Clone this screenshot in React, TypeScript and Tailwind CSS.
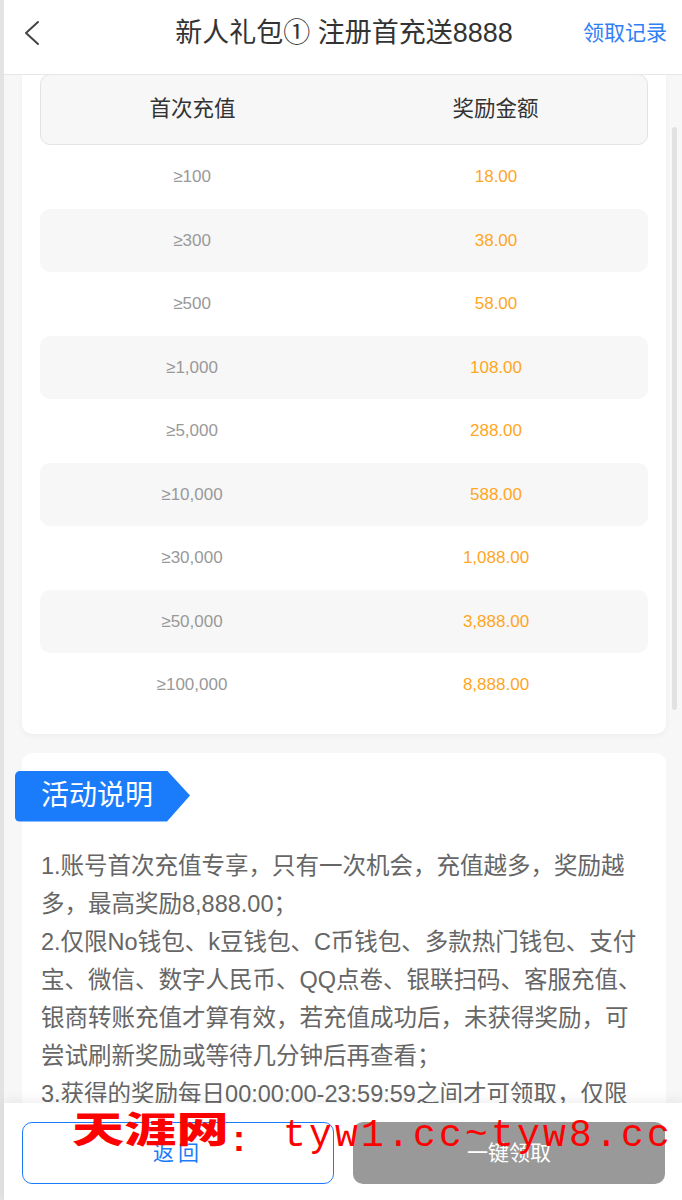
import React from "react";

const rows = [
  ["≥100", "18.00"],
  ["≥300", "38.00"],
  ["≥500", "58.00"],
  ["≥1,000", "108.00"],
  ["≥5,000", "288.00"],
  ["≥10,000", "588.00"],
  ["≥30,000", "1,088.00"],
  ["≥50,000", "3,888.00"],
  ["≥100,000", "8,888.00"],
];

const lines = [
  "1.账号首次充值专享，只有一次机会，充值越多，奖励越",
  "多，最高奖励8,888.00；",
  "2.仅限No钱包、k豆钱包、C币钱包、多款热门钱包、支付",
  "宝、微信、数字人民币、QQ点卷、银联扫码、客服充值、",
  "银商转账充值才算有效，若充值成功后，未获得奖励，可",
  "尝试刷新奖励或等待几分钟后再查看；",
  "3.获得的奖励每日00:00:00-23:59:59之间才可领取，仅限",
  "当日有效，过期作废；",
];

const font = { fontFamily: '"Liberation Sans","Noto Sans CJK SC",sans-serif' };

export default function App() {
  return (
    <div className="w-[682px] h-[1200px] overflow-hidden flex bg-[#f7f7f7]" style={font}>
      <div className="w-[4px] h-full bg-[#e3e3e3] flex-none" />
      <div className="relative flex-1 flex flex-col h-full">
        {/* header */}
        <div className="h-[75px] flex-none bg-white border-b border-[#e6e6e6] pb-[8px] grid grid-cols-[1fr_auto_1fr] items-center">
          <div className="pl-[19px] flex items-center">
            <svg width="18" height="26" viewBox="0 0 18 26" fill="none">
              <polyline points="15,2 3,13 15,24" stroke="#444" strokeWidth="2" strokeLinecap="round" strokeLinejoin="round" />
            </svg>
          </div>
          <div className="text-[27px] text-[#333] whitespace-nowrap leading-none">新人礼包① 注册首充送8888</div>
          <div className="flex justify-end pr-[17px] text-[21px] text-[#2f80f5]">领取记录</div>
        </div>

        {/* content */}
        <div className="flex-1 overflow-hidden px-[18px]">
          <div className="w-[644px] bg-white rounded-b-[10px] px-[18px] pb-[17px] shadow-[0_2px_6px_rgba(0,0,0,0.04)]">
            <div className="h-[71px] -mt-[1px] bg-[#f7f7f7] border border-[#e3e3e3] rounded-[10px] grid grid-cols-2 items-center text-[21.5px] text-[#333]">
              <div className="text-center">首次充值</div>
              <div className="text-center">奖励金额</div>
            </div>
            {rows.map((r, i) => (
              <div
                key={i}
                className={`h-[63.5px] grid grid-cols-2 items-center rounded-[10px] text-[17px] ${i % 2 === 1 ? "bg-[#f7f7f7]" : ""}`}
              >
                <div className="text-center text-[#999]">{r[0]}</div>
                <div className="text-center text-[#ffa623]">{r[1]}</div>
              </div>
            ))}
          </div>

          <div className="w-[644px] mt-[19px] bg-white rounded-[10px] pt-[18px] pb-[40px]">
            <div
              className="-ml-[7px] w-[175px] h-[51px] bg-[#1b7cfb] rounded-l-[5px] flex items-center pl-[26px] text-[28px] text-white"
              style={{ clipPath: "polygon(0 0, 152px 0, 175px 25px, 152px 51px, 0 51px)" }}
            >
              活动说明
            </div>
            <div className="mt-[25px] px-[19px] text-[23.5px] leading-[38px] text-[#666]">
              {lines.map((l, i) => (
                <div key={i} className="whitespace-nowrap">{l}</div>
              ))}
            </div>
          </div>
        </div>

        {/* scrollbar */}
        <div className="absolute left-[668px] top-[127px] w-[5px] h-[583px] rounded-full bg-[#e2e2e2]" />

        {/* bottom bar */}
        <div className="absolute left-0 right-0 bottom-0 h-[97px] bg-white shadow-[0_-4px_10px_rgba(0,0,0,0.06)] flex gap-[19px] px-[18px] pt-[19px]">
          <div className="w-[312px] h-[62px] rounded-[10px] border border-[#1b7cfb] flex items-center justify-center text-[21px] text-[#1b7cfb] tracking-[4px]">
            返回
          </div>
          <div className="w-[312px] h-[62px] rounded-[10px] bg-[#999] flex items-center justify-center text-[21px] text-white">
            一键领取
          </div>
        </div>

        {/* watermark */}
        <span
          className="absolute left-[68px] top-[1109px] inline-block origin-left scale-x-[1.45] text-[36px] font-black leading-none text-[#ff0000] whitespace-nowrap pointer-events-none"
          style={{ fontFamily: '"Noto Sans CJK SC",sans-serif' }}
        >
          天涯网
        </span>
        <span
          className="absolute left-[229px] top-[1121px] text-[36px] font-bold leading-none text-[#ff0000] pointer-events-none"
          style={{ fontFamily: '"Liberation Sans",sans-serif' }}
        >
          :
        </span>
        <span
          className="absolute left-[279px] top-[1117px] text-[38px] tracking-[3.2px] leading-none text-[#ff0000] whitespace-nowrap pointer-events-none"
          style={{ fontFamily: '"Liberation Mono",monospace' }}
        >
          tyw1.cc~tyw8.cc
        </span>
      </div>
    </div>
  );
}
